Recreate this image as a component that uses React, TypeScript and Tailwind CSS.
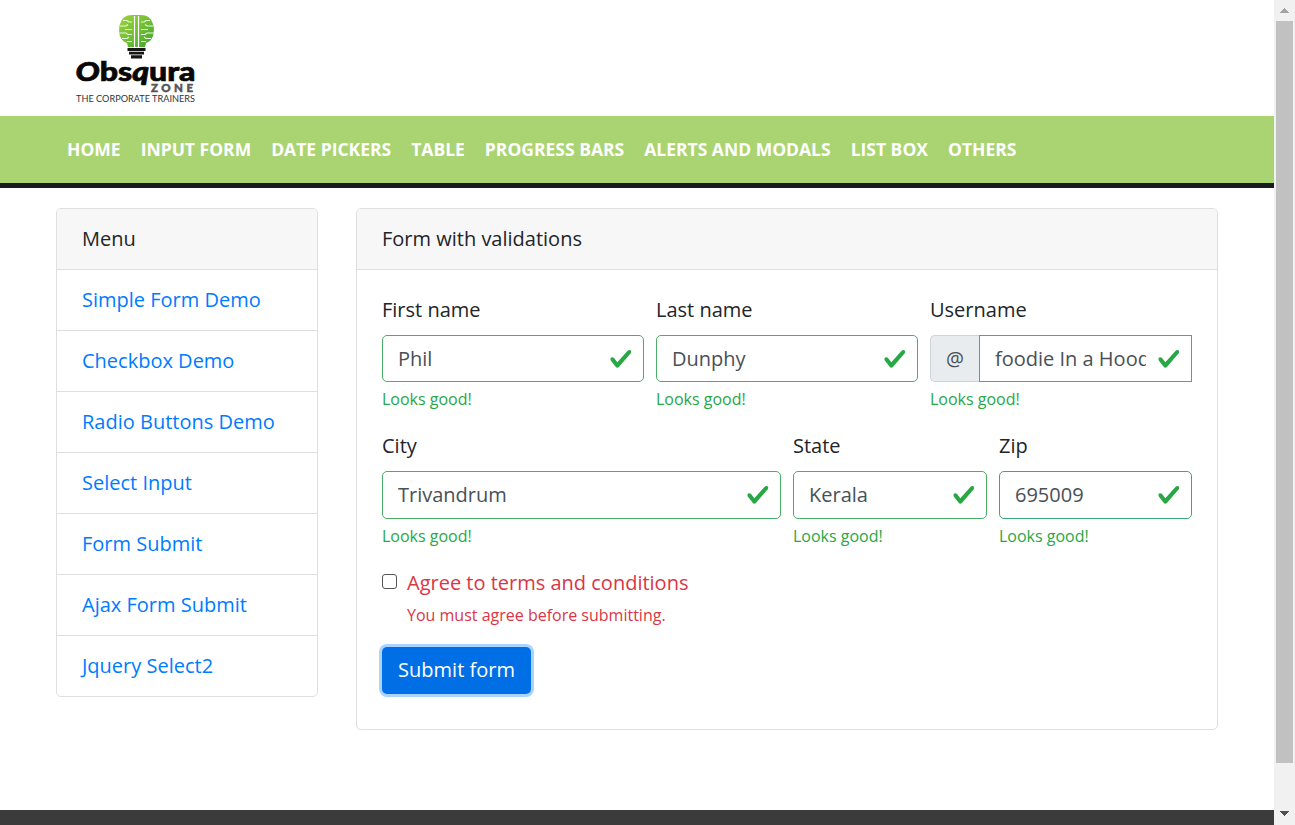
import React from 'react';

const navItems = ['HOME', 'INPUT FORM', 'DATE PICKERS', 'TABLE', 'PROGRESS BARS', 'ALERTS AND MODALS', 'LIST BOX', 'OTHERS'];
const menuItems = ['Simple Form Demo', 'Checkbox Demo', 'Radio Buttons Demo', 'Select Input', 'Form Submit', 'Ajax Form Submit', 'Jquery Select2'];

function Logo() {
  return (
    <svg width="150" height="110" viewBox="0 0 150 110" aria-label="Obsqura Zone">
      <defs>
        <linearGradient id="bulb" x1="0" y1="0" x2="1" y2="1">
          <stop offset="0" stopColor="#a0d33c" />
          <stop offset="0.5" stopColor="#72bf35" />
          <stop offset="1" stopColor="#3fa032" />
        </linearGradient>
      </defs>
      <path d="M76 10H72C66 10 62 13 61 17C58.500 20 58.500 30 61 33C62 36 65 37 67 38L68 42H85L86 38C88 37 91 36 92 33C94.500 30 94.500 20 92 17C91 13 87 10 81 10Z" fill="url(#bulb)" />
      <path d="M74.500 11V42M78.500 11V42" fill="none" stroke="#fff" strokeWidth="1.200" />
      <path d="M63 15.500H67L69 17H72M90 15.500H86L84 17H81M60 21H66L68 19.500M93 21H87L85 19.500M65 24.500H72M81 24.500H88M59 28H66L68 29.500H72M94 28H87L85 29.500H81M62 33.500H67L69 32M91 33.500H86L84 32M67 36.500H72M81 36.500H86" fill="none" stroke="#eaf7dc" strokeWidth="1.100" />
      <path d="M67.500 43H85.500V46H67.500ZM69 46.700H84V49.500H69ZM71 50.200H82V53.500H71Z" fill="#151515" />
      <text x="15.500" y="75.500" textLength="120" lengthAdjust="spacingAndGlyphs" fontFamily="Lato" fontWeight="900" fontSize="27" fill="#080808" stroke="#080808" strokeWidth="0.700"><tspan fontStyle="italic">O</tspan>bs<tspan fontStyle="italic">q</tspan>ura</text>
      <text x="91" y="87" textLength="42" lengthAdjust="spacing" fontFamily="Lato" fontWeight="900" fontSize="11.500" fill="#555" stroke="#555" strokeWidth="0.500">ZONE</text>
      <text x="16" y="96.500" textLength="119" lengthAdjust="spacingAndGlyphs" fontFamily="Lato" fontSize="8.500" fill="#333">THE CORPORATE TRAINERS</text>
    </svg>
  );
}

function Field({ label, value, width, prefix, height = 'h-[47px]', color = 'border-[#4aae66]' }: { label: string; value: string; width: string; prefix?: string; height?: string; color?: string }) {
  return (
    <div className={`flex flex-col ${width}`}>
      <label className="mb-[10px] leading-[30px]">{label}</label>
      <div className={`flex ${height}`}>
        {prefix && (
          <span className="flex w-[49px] shrink-0 items-center justify-center rounded-l-[5px] border border-r-0 border-[#ced4da] bg-[#e9ecef] text-[#495057]">{prefix}</span>
        )}
        <div className={`flex min-w-0 flex-1 items-center border bg-white pl-[15px] pr-[10px] ${color} ${prefix ? '' : 'rounded-[5px]'}`}>
          <input aria-label={label} defaultValue={value} className="min-w-0 flex-1 bg-transparent p-0 text-[#495057] outline-none" />
          <svg className="ml-[11.500px] shrink-0" width="23.750" height="23.750" viewBox="0 0 8 8">
            <path fill="#28a745" d="M2.3 6.73L.6 4.53c-.4-1.04.46-1.4 1.1-.8l1.1 1.4 3.4-3.8c.6-.63 1.6-.27 1.2.7l-4 4.6c-.43.5-.8.4-1.1.1z" />
          </svg>
        </div>
      </div>
      <span className="mt-[5px] text-base leading-6 text-[#28a745]">Looks good!</span>
    </div>
  );
}

export default function App() {
  return (
    <div className="flex h-[825px] w-[1295px] overflow-hidden bg-white font-['Open_Sans',sans-serif] text-xl font-normal text-[#212529]">
      <div className="flex w-[1274px] flex-col">
        <header className="h-[116px] shrink-0 pl-[60px] pt-[5px]"><Logo /></header>
        <nav className="flex h-[72px] shrink-0 items-center gap-5 whitespace-nowrap border-b-[5px] border-[#1b1a20] bg-[#a9d471] pl-[67px] text-[17.500px] font-bold text-white">
          {navItems.map((item) => <a key={item}>{item}</a>)}
        </nav>
        <main className="flex h-[622px] shrink-0 items-start gap-[38px] pl-14 pt-5">
          <aside className="w-[262px] overflow-hidden rounded-[5px] border border-[#dfdfdf]">
            <div className="h-[60px] bg-[#f7f7f7] px-[25px] leading-[60px]">Menu</div>
            {menuItems.map((item) => (
              <a key={item} className="block h-[61px] border-t border-[#dfdfdf] px-[25px] leading-[60px] text-[#007bff]">{item}</a>
            ))}
          </aside>
          <section className="h-[522px] w-[862px] overflow-hidden rounded-[5px] border border-[#dfdfdf]">
            <div className="h-[61px] border-b border-[#dfdfdf] bg-[#f7f7f7] px-[25px] leading-[60px]">Form with validations</div>
            <form className="px-[25px] pt-[25px]">
              <div className="flex gap-3">
                <Field label="First name" value="Phil" width="w-[262px]" />
                <Field label="Last name" value="Dunphy" width="w-[262px]" />
                <Field label="Username" value="foodie In a Hood" width="w-[262px]" prefix="@" />
              </div>
              <div className="mt-5 flex gap-3">
                <Field label="City" value="Trivandrum" width="w-[399px]" height="h-12" />
                <Field label="State" value="Kerala" width="w-[194px]" height="h-12" />
                <Field label="Zip" value="695009" width="w-[193px]" height="h-12" color="border-[#40a776]" />
              </div>
              <div className="mt-5 flex items-start">
                <input type="checkbox" aria-label="Agree to terms and conditions" className="mt-[6px] h-[15px] w-[15px] shrink-0 appearance-none rounded-[3px] border-[1.500px] border-[#555] bg-white" />
                <div className="ml-[10px] flex flex-col text-[#dc3545]">
                  <span className="leading-[30px]">Agree to terms and conditions</span>
                  <span className="mt-[5px] text-base leading-6">You must agree before submitting.</span>
                </div>
              </div>
              <button type="button" className="mt-5 h-[47px] w-[149px] rounded-[5px] bg-[#006fe6] pb-[2px] font-normal text-white shadow-[0_0_0_3px_#abd3ff]">Submit form</button>
            </form>
          </section>
        </main>
        <footer className="h-[15px] shrink-0 bg-[#3b3b3b]" />
      </div>
      <div className="flex w-[21px] flex-col items-center bg-[#f1f1f1]">
        <div className="flex h-[21px] w-full items-center justify-center">
          <svg width="9" height="5" viewBox="0 0 9 5" shapeRendering="crispEdges"><path fill="#a3a3a3" d="M4.500 0L9 5H0Z" /></svg>
        </div>
        <div className="h-[742px] w-[17px] bg-[#c1c1c1]" />
        <div className="mt-auto flex h-[23px] w-full items-center justify-center">
          <svg width="9" height="5" viewBox="0 0 9 5" shapeRendering="crispEdges"><path fill="#505050" d="M0 0H9L4.500 5Z" /></svg>
        </div>
      </div>
    </div>
  );
}
